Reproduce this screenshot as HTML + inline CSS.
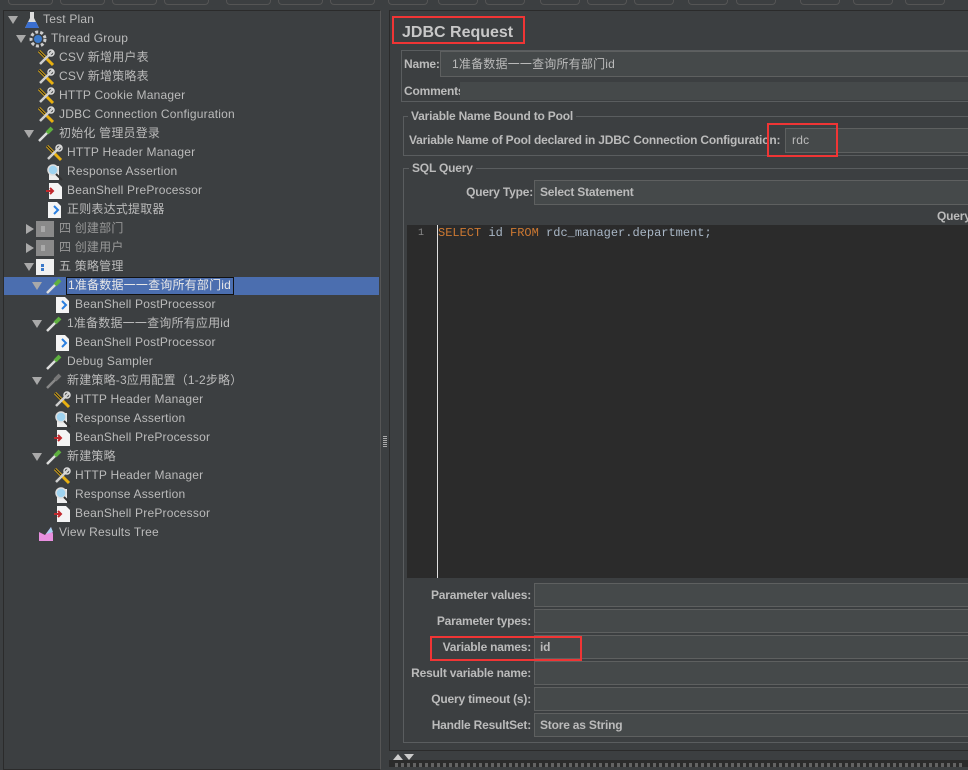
<!DOCTYPE html>
<html><head><meta charset="utf-8"><style>
*{margin:0;padding:0;box-sizing:border-box}
body{width:968px;height:767px;background:#3c3f41;overflow:hidden;position:relative;font-family:"Liberation Sans","Noto Sans CJK SC",sans-serif;font-size:12px;color:#bbbbbb}
.a{position:absolute}
.t{position:absolute;white-space:nowrap;line-height:14px;letter-spacing:0.2px}
.ic{position:absolute;width:18px;height:18px}
.arr{position:absolute;width:0;height:0}
.dn{border-left:5px solid transparent;border-right:5px solid transparent;border-top:8px solid #a9a9a9}
.rt{border-top:5px solid transparent;border-bottom:5px solid transparent;border-left:8px solid #a9a9a9}
.fld{position:absolute;background:#45494a;border:1px solid #5e6060}
.lbl{position:absolute;white-space:nowrap;text-align:right;line-height:14px;color:#bbbbbb;font-weight:bold;letter-spacing:-0.2px}
.b{font-weight:bold;letter-spacing:-0.2px}
.red{position:absolute;border:2px solid #f03535}
.btn{position:absolute;top:0;height:5px;border:1px solid #555;border-top:none;border-radius:0 0 4px 4px;background:#3c3f41}
</style></head><body>
<svg width="0" height="0" style="position:absolute">
<defs>
<symbol id="w" viewBox="0 0 18 18"><path d="M2 2 L16 16" stroke="#e8b010" stroke-width="3"/><path d="M16 2 L3 15" stroke="#cfcfcf" stroke-width="2.5"/><path d="M2 2 L8 8" stroke="#222" stroke-width="1.2"/><circle cx="14" cy="4" r="3" fill="none" stroke="#ddd" stroke-width="1.5"/></symbol>
<symbol id="p" viewBox="0 0 18 18"><path d="M2 16 L11 7" stroke="#ddd" stroke-width="2.5"/><path d="M10 8 L15 3" stroke="#5fb040" stroke-width="4"/></symbol>
<symbol id="pg" viewBox="0 0 18 18"><path d="M2 16 L11 7" stroke="#888" stroke-width="2.5"/><path d="M10 8 L15 3" stroke="#777" stroke-width="4"/></symbol>
<symbol id="d" viewBox="0 0 18 18"><path d="M3 1 H12 L16 5 V17 H3 Z" fill="#f4f4f4"/><path d="M9 5 L13 9 L9 13" stroke="#2a7fe0" stroke-width="2" fill="none"/></symbol>
<symbol id="dr" viewBox="0 0 18 18"><path d="M4 1 H13 L17 5 V17 H4 Z" fill="#f4f4f4"/><path d="M1 9 H8 M5 6 L8 9 L5 12" stroke="#c0282c" stroke-width="2" fill="none"/></symbol>
<symbol id="m" viewBox="0 0 18 18"><path d="M4 3 H14 V17 H4Z" fill="#eee"/><circle cx="8" cy="7" r="5" fill="#9fd3f0" stroke="#ddd" stroke-width="1.5"/><path d="M11 11 L17 17" stroke="#333" stroke-width="2"/></symbol>
<symbol id="f" viewBox="0 0 18 18"><rect x="0" y="1" width="18" height="16" fill="#8a8a8a"/><rect x="5" y="6" width="4" height="6" fill="#aaa"/></symbol>
<symbol id="fw" viewBox="0 0 18 18"><rect x="0" y="1" width="18" height="16" fill="#f0f0f0"/><rect x="5" y="6" width="3" height="3" fill="#3a78c8"/><rect x="5" y="10" width="3" height="3" fill="#3a78c8"/></symbol>
</defs></svg>

<div class="btn" style="left:8px;width:45px"></div><div class="btn" style="left:60px;width:45px"></div><div class="btn" style="left:112px;width:45px"></div><div class="btn" style="left:164px;width:45px"></div><div class="btn" style="left:226px;width:45px"></div><div class="btn" style="left:278px;width:45px"></div><div class="btn" style="left:330px;width:45px"></div>
<div class="btn" style="left:388px;width:40px"></div><div class="btn" style="left:438px;width:40px"></div><div class="btn" style="left:485px;width:40px"></div><div class="btn" style="left:540px;width:40px"></div><div class="btn" style="left:587px;width:40px"></div><div class="btn" style="left:634px;width:40px"></div><div class="btn" style="left:688px;width:40px"></div><div class="btn" style="left:736px;width:40px"></div><div class="btn" style="left:800px;width:40px"></div><div class="btn" style="left:853px;width:40px"></div><div class="btn" style="left:905px;width:40px"></div>

<div class="a" style="left:3px;top:10px;width:378px;height:760px;border:1px solid #2b2b2b;border-right:1px solid #555"></div>
<div class="a" style="left:4px;top:277px;width:375px;height:18px;background:#4b6eaf"></div>
<div class="a" style="left:66px;top:277px;width:168px;height:18px;border:1px solid #111"></div>
<div class="a" style="left:383px;top:436px;width:4px;height:12px;background:repeating-linear-gradient(#aaa 0 1px,transparent 1px 2px)"></div>

<div class="arr dn" style="left:8px;top:16px"></div><svg class="ic" style="left:23px;top:11px" viewBox="0 0 18 18"><path d="M7 1 H11 V7 L16 17 H2 L7 7Z" fill="#ddd"/><path d="M5 11 H13 L16 17 H2Z" fill="#3a6ed0"/></svg><div class="t" style="left:43px;top:12px">Test Plan</div>
<div class="arr dn" style="left:16px;top:35px"></div><svg class="ic" style="left:29px;top:30px" viewBox="0 0 18 18"><circle cx="9" cy="9" r="7" fill="none" stroke="#ccc" stroke-width="3" stroke-dasharray="3 2"/><circle cx="9" cy="9" r="4" fill="#3a78c8"/></svg><div class="t" style="left:51px;top:31px">Thread Group</div>
<svg class="ic" style="left:37px;top:49px"><use href="#w"/></svg><div class="t" style="left:59px;top:50px">CSV 新增用户表</div>
<svg class="ic" style="left:37px;top:68px"><use href="#w"/></svg><div class="t" style="left:59px;top:69px">CSV 新增策略表</div>
<svg class="ic" style="left:37px;top:87px"><use href="#w"/></svg><div class="t" style="left:59px;top:88px">HTTP Cookie Manager</div>
<svg class="ic" style="left:37px;top:106px"><use href="#w"/></svg><div class="t" style="left:59px;top:107px">JDBC Connection Configuration</div>
<div class="arr dn" style="left:24px;top:130px"></div><svg class="ic" style="left:37px;top:125px"><use href="#p"/></svg><div class="t" style="left:59px;top:126px">初始化 管理员登录</div>
<svg class="ic" style="left:45px;top:144px"><use href="#w"/></svg><div class="t" style="left:67px;top:145px">HTTP Header Manager</div>
<svg class="ic" style="left:45px;top:163px"><use href="#m"/></svg><div class="t" style="left:67px;top:164px">Response Assertion</div>
<svg class="ic" style="left:45px;top:182px"><use href="#dr"/></svg><div class="t" style="left:67px;top:183px">BeanShell PreProcessor</div>
<svg class="ic" style="left:45px;top:201px"><use href="#d"/></svg><div class="t" style="left:67px;top:202px">正则表达式提取器</div>
<div class="arr rt" style="left:26px;top:224px"></div><svg class="ic" style="left:36px;top:220px"><use href="#f"/></svg><div class="t" style="left:59px;top:221px;color:#999">四 创建部门</div>
<div class="arr rt" style="left:26px;top:243px"></div><svg class="ic" style="left:36px;top:239px"><use href="#f"/></svg><div class="t" style="left:59px;top:240px;color:#999">四 创建用户</div>
<div class="arr dn" style="left:24px;top:263px"></div><svg class="ic" style="left:36px;top:258px"><use href="#fw"/></svg><div class="t" style="left:59px;top:259px">五 策略管理</div>
<div class="arr dn" style="left:32px;top:282px"></div><svg class="ic" style="left:45px;top:277px"><use href="#p"/></svg><div class="t" style="left:68px;top:278px;color:#e8e8e8">1准备数据一一查询所有部门id</div>
<svg class="ic" style="left:53px;top:296px"><use href="#d"/></svg><div class="t" style="left:75px;top:297px">BeanShell PostProcessor</div>
<div class="arr dn" style="left:32px;top:320px"></div><svg class="ic" style="left:45px;top:315px"><use href="#p"/></svg><div class="t" style="left:67px;top:316px">1准备数据一一查询所有应用id</div>
<svg class="ic" style="left:53px;top:334px"><use href="#d"/></svg><div class="t" style="left:75px;top:335px">BeanShell PostProcessor</div>
<svg class="ic" style="left:45px;top:353px"><use href="#p"/></svg><div class="t" style="left:67px;top:354px">Debug Sampler</div>
<div class="arr dn" style="left:32px;top:377px"></div><svg class="ic" style="left:45px;top:372px"><use href="#pg"/></svg><div class="t" style="left:67px;top:373px">新建策略-3应用配置（1-2步略）</div>
<svg class="ic" style="left:53px;top:391px"><use href="#w"/></svg><div class="t" style="left:75px;top:392px">HTTP Header Manager</div>
<svg class="ic" style="left:53px;top:410px"><use href="#m"/></svg><div class="t" style="left:75px;top:411px">Response Assertion</div>
<svg class="ic" style="left:53px;top:429px"><use href="#dr"/></svg><div class="t" style="left:75px;top:430px">BeanShell PreProcessor</div>
<div class="arr dn" style="left:32px;top:453px"></div><svg class="ic" style="left:45px;top:448px"><use href="#p"/></svg><div class="t" style="left:67px;top:449px">新建策略</div>
<svg class="ic" style="left:53px;top:467px"><use href="#w"/></svg><div class="t" style="left:75px;top:468px">HTTP Header Manager</div>
<svg class="ic" style="left:53px;top:486px"><use href="#m"/></svg><div class="t" style="left:75px;top:487px">Response Assertion</div>
<svg class="ic" style="left:53px;top:505px"><use href="#dr"/></svg><div class="t" style="left:75px;top:506px">BeanShell PreProcessor</div>
<svg class="ic" style="left:37px;top:524px" viewBox="0 0 18 18"><path d="M2 17 V8 L8 11 L14 3 L16 10 V17Z" fill="#e890e0"/><path d="M9 10 L14 3 L16 8Z" fill="#a8d0f0"/></svg><div class="t" style="left:59px;top:525px">View Results Tree</div>

<div class="a" style="left:389px;top:10px;width:579px;height:740px;border-left:1px solid #2b2b2b;border-top:1px solid #2b2b2b"></div>
<div class="t" style="left:402px;top:23px;font-size:16px;font-weight:bold;line-height:19px;color:#c8c8c8;letter-spacing:0">JDBC Request</div>
<div class="red" style="left:392px;top:16px;width:133px;height:28px"></div>

<div class="a" style="left:401px;top:50px;width:570px;height:52px;border:1px solid #5a5d5f"></div>
<div class="lbl" style="left:404px;top:57px">Name:</div>
<div class="fld" style="left:440px;top:51px;width:540px;height:26px"></div>
<div class="t" style="left:452px;top:57px">1准备数据一一查询所有部门id</div>
<div class="lbl" style="left:404px;top:84px">Comments:</div>
<div class="a" style="left:460px;top:82px;width:520px;height:18px;background:#45494a"></div>

<div class="a" style="left:403px;top:116px;width:570px;height:40px;border:1px solid #5a5d5f"></div>
<div class="t b" style="left:408px;top:109px;background:#3c3f41;padding:0 3px">Variable Name Bound to Pool</div>
<div class="lbl" style="left:409px;top:133px">Variable Name of Pool declared in JDBC Connection Configuration:</div>
<div class="fld" style="left:785px;top:128px;width:200px;height:25px"></div>
<div class="t" style="left:792px;top:133px">rdc</div>
<div class="red" style="left:767px;top:123px;width:71px;height:34px"></div>

<div class="a" style="left:403px;top:168px;width:570px;height:575px;border:1px solid #5a5d5f"></div>
<div class="t b" style="left:409px;top:161px;background:#3c3f41;padding:0 3px">SQL Query</div>
<div class="lbl" style="right:435px;top:185px">Query Type:</div>
<div class="fld" style="left:534px;top:180px;width:450px;height:25px"></div>
<div class="t b" style="left:540px;top:185px">Select Statement</div>
<div class="t b" style="left:937px;top:209px">Query</div>
<div class="a" style="left:407px;top:225px;width:570px;height:353px;background:#2b2b2b"></div>
<div class="a" style="left:437px;top:225px;width:1px;height:353px;background:#e0e0e0"></div>
<div class="t" style="left:418px;top:227px;font-family:'Liberation Mono',monospace;font-size:10px;color:#888">1</div>
<div class="t" style="left:438px;top:226px;font-family:'Liberation Mono',monospace;font-size:12px;color:#a9b7c6;letter-spacing:0"><span style="color:#cc7832">SELECT</span> id <span style="color:#cc7832">FROM</span> rdc_manager.department;</div>

<div class="lbl" style="right:437px;top:588px">Parameter values:</div><div class="fld" style="left:534px;top:583px;width:450px;height:24px"></div>
<div class="lbl" style="right:437px;top:614px">Parameter types:</div><div class="fld" style="left:534px;top:609px;width:450px;height:24px"></div>
<div class="lbl" style="right:437px;top:640px">Variable names:</div><div class="fld" style="left:534px;top:635px;width:450px;height:24px"></div><div class="t b" style="left:540px;top:640px">id</div>
<div class="red" style="left:430px;top:636px;width:152px;height:25px"></div>
<div class="lbl" style="right:437px;top:666px">Result variable name:</div><div class="fld" style="left:534px;top:661px;width:450px;height:24px"></div>
<div class="lbl" style="right:437px;top:692px">Query timeout (s):</div><div class="fld" style="left:534px;top:687px;width:450px;height:24px"></div>
<div class="lbl" style="right:437px;top:718px">Handle ResultSet:</div><div class="fld" style="left:534px;top:713px;width:450px;height:24px"></div><div class="t b" style="left:540px;top:718px">Store as String</div>

<div class="a" style="left:389px;top:750px;width:579px;height:10px;background:#3c3f41;border-top:1px solid #2b2b2b"></div>
<div class="arr" style="left:393px;top:754px;border-left:5px solid transparent;border-right:5px solid transparent;border-bottom:6px solid #ccc"></div>
<div class="arr" style="left:404px;top:754px;border-left:5px solid transparent;border-right:5px solid transparent;border-top:6px solid #ccc"></div>
<div class="a" style="left:389px;top:760px;width:579px;height:7px;background:#2b2b2b"></div>
<div class="a" style="left:395px;top:763px;width:570px;height:4px;background:repeating-linear-gradient(90deg,#888 0 3px,transparent 3px 6px);opacity:.6"></div>
</body></html>
